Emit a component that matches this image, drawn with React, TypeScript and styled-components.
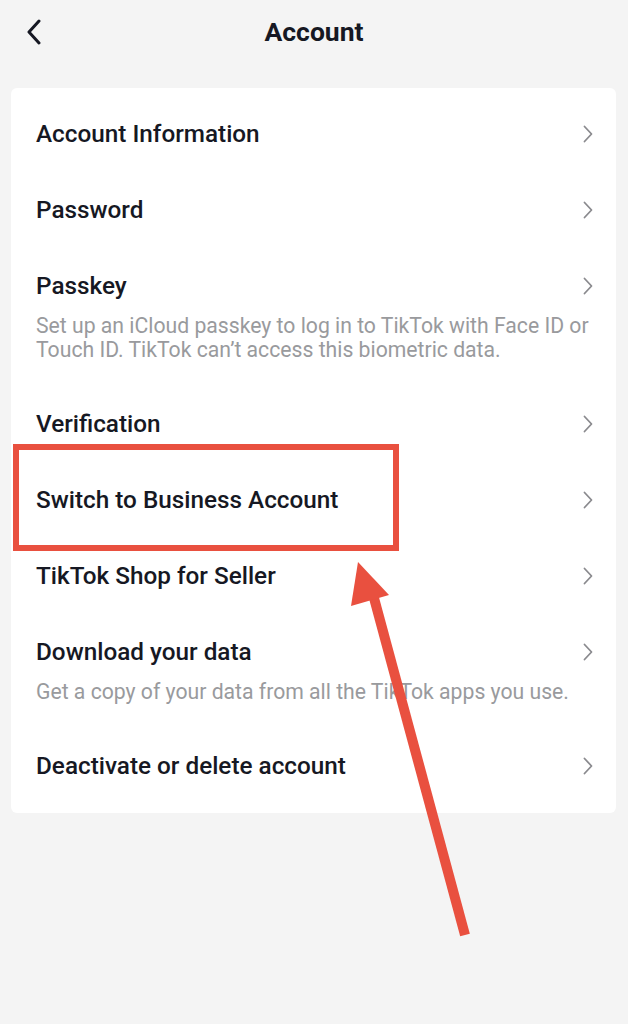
import React from 'react'
import styled, { createGlobalStyle } from 'styled-components'

const GlobalStyle = createGlobalStyle`
    html, body {
        margin: 0;
        padding: 0;
        background: #f4f4f4;
        font-family: Roboto, "Noto Sans", sans-serif;
        -webkit-font-smoothing: antialiased;
    }
`;

const Page = styled.div`
    position: relative;
    width: 628px;
    min-height: 1024px;
    background: #f4f4f4;
    overflow: hidden;
`;

const Header = styled.header`
    display: flex;
    align-items: center;
    justify-content: center;
    height: 62px;
    position: relative;
`;

const BackButton = styled.button`
    position: absolute;
    left: 20px;
    top: 16px;
    width: 28px;
    height: 32px;
    padding: 0;
    border: none;
    background: none;
    display: flex;
    align-items: center;
    justify-content: center;
`;

const Title = styled.h1`
    margin: 0;
    font-size: 26.5px;
    font-weight: 700;
    color: #161823;
`;

const Card = styled.div`
    margin: 26px 12px 0 11px;
    background: #fff;
    border-radius: 6px;
    padding: 8px 0 9px;
`;

const Row = styled.div`
    display: flex;
    flex-direction: column;
    padding: 24px 22px 24px 25px;
`;

const RowHead = styled.div`
    display: flex;
    align-items: center;
    justify-content: space-between;
    height: 28px;
`;

const RowTitle = styled.div`
    font-size: 24.3px;
    font-weight: 500;
    line-height: 28px;
    color: #161823;
`;

const RowDesc = styled.div`
    margin-top: 14px;
    font-size: 21.2px;
    line-height: 24px;
    color: #999a9d;
`;

const Highlight = styled.div`
    position: absolute;
    left: 13px;
    top: 444px;
    width: 386px;
    height: 107px;
    box-sizing: border-box;
    border: 6px solid #e9503f;
    pointer-events: none;
`;

const ArrowLayer = styled.svg`
    position: absolute;
    left: 0;
    top: 0;
    pointer-events: none;
`;

interface Item {
    title: string,
    desc?: string
}

const items: Item[] = [
    { title: 'Account Information' },
    { title: 'Password' },
    { title: 'Passkey', desc: 'Set up an iCloud passkey to log in to TikTok with Face ID or Touch ID. TikTok can\u2019t access this biometric data.' },
    { title: 'Verification' },
    { title: 'Switch to Business Account' },
    { title: 'TikTok Shop for Seller' },
    { title: 'Download your data', desc: 'Get a copy of your data from all the TikTok apps you use.' },
    { title: 'Deactivate or delete account' },
];

const ChevronRight = () => (
    <svg width="12" height="18" viewBox="0 0 12 18">
        <path d="M2.5 1.5 L9.5 9 L2.5 16.5" fill="none" stroke="#8a8a8e" strokeWidth="1.8" strokeLinecap="round" strokeLinejoin="round" />
    </svg>
);

const App: React.FC = () => {
    return (
        <Page>
            <GlobalStyle />
            <Header>
                <BackButton aria-label="Back">
                    <svg width="18" height="26" viewBox="0 0 18 26">
                        <path d="M14 2 L4 13 L14 24" fill="none" stroke="#161823" strokeWidth="3" strokeLinecap="round" strokeLinejoin="round" />
                    </svg>
                </BackButton>
                <Title>Account</Title>
            </Header>
            <Card>
                {items.map(item => (
                    <Row key={item.title}>
                        <RowHead>
                            <RowTitle>{item.title}</RowTitle>
                            <ChevronRight />
                        </RowHead>
                        {item.desc && <RowDesc>{item.desc}</RowDesc>}
                    </Row>
                ))}
            </Card>
            <Highlight />
            <ArrowLayer width="628" height="1024" viewBox="0 0 628 1024">
                <line x1="465" y1="935" x2="374" y2="598" stroke="#e9503f" strokeWidth="10" />
                <polygon points="358,562 351,606 389,595" fill="#e9503f" />
            </ArrowLayer>
        </Page>
    )
}

export default App
